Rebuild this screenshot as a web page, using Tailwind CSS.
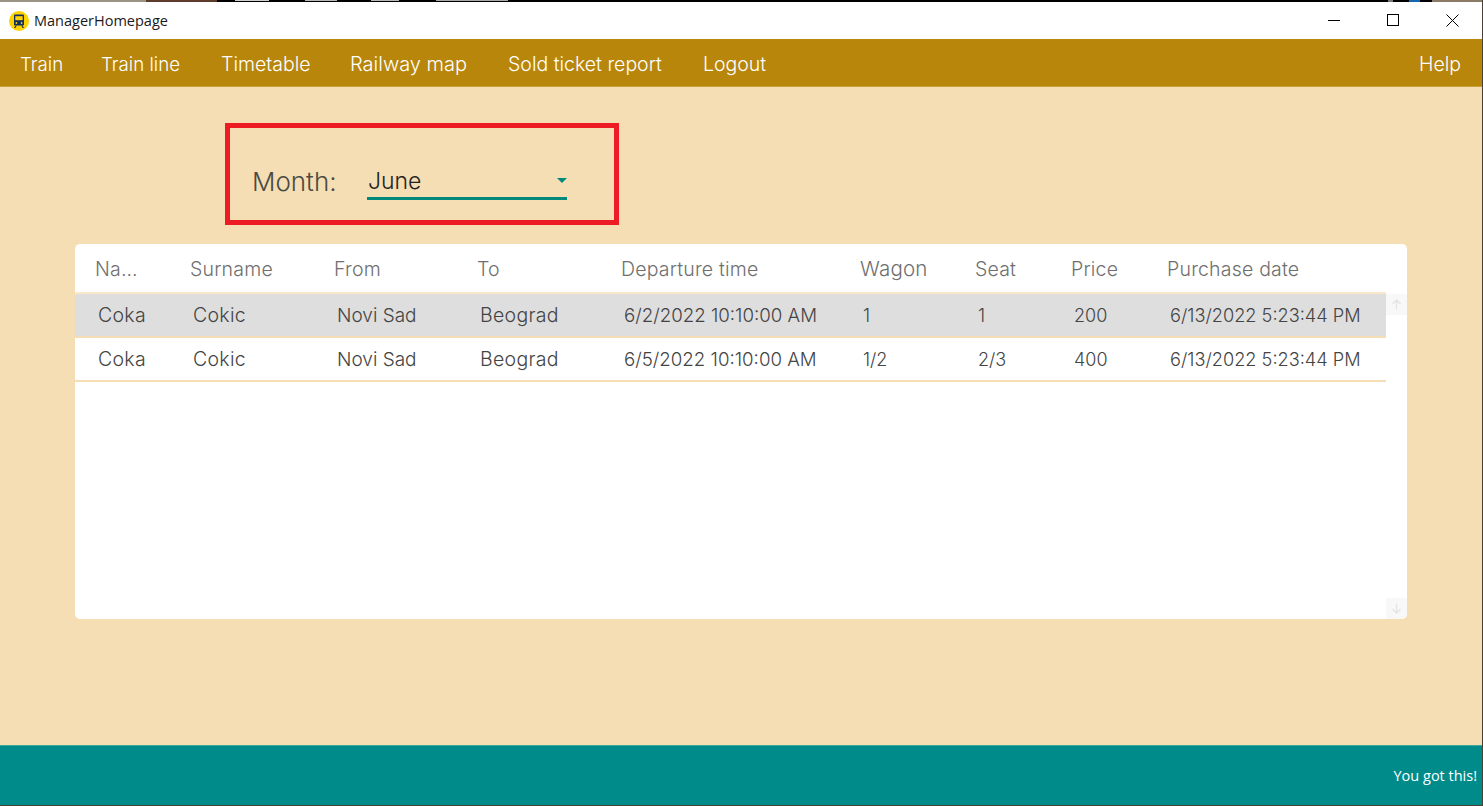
<!DOCTYPE html>
<html lang="en">
<head>
    <meta charset="UTF-8">
    <title>ManagerHomepage</title>
    <script src="https://cdn.jsdelivr.net/npm/@tailwindcss/browser@4"></script>
</head>
<body class="h-[806px] w-[1483px] overflow-hidden flex flex-col bg-[#f5deb3] font-['Inter','Liberation_Sans',sans-serif] font-light border-r border-b border-[#4a4036]">
    <!-- desktop behind the window -->
    <div class="h-[2px] shrink-0 bg-black flex">
        <div class="w-[146px] bg-[#9a9386]"></div>
        <div class="w-[71px] bg-[#5c3a2c]"></div>
        <div class="ml-[18px] w-[34px] h-px bg-[#cfcfcf]"></div>
        <div class="ml-[36px] w-[32px] h-px bg-[#b8b8b8]"></div>
        <div class="ml-[34px] w-[28px] h-px bg-[#b8b8b8]"></div>
        <div class="ml-[37px] w-[72px] h-px bg-[#a8a8a8]"></div>
        <div class="ml-[880px] w-[5px] bg-[#777]"></div>
        <div class="ml-[16px] w-[11px] bg-[#1565b0]"></div>
        <div class="ml-[12px] flex-1 bg-[#8a7a66]"></div>
    </div>

    <!-- title bar -->
    <div class="h-[37px] shrink-0 bg-white flex items-center">
        <svg class="ml-[9px] w-5 h-5" viewBox="0 0 20 20">
            <circle cx="10" cy="10" r="10" fill="#ffd200"/>
            <path d="M6 3.5h8a1 1 0 0 1 1 1v9a1 1 0 0 1-1 1H6a1 1 0 0 1-1-1v-9a1 1 0 0 1 1-1z" fill="#14315e"/>
            <rect x="6.3" y="5.2" width="7.4" height="4" fill="#ffd200"/>
            <path d="M6.5 14.5 5 17h1.4l1.4-2.5zM13.5 14.5 15 17h-1.4l-1.4-2.5z" fill="#14315e"/>
            <circle cx="7.4" cy="12" r=".9" fill="#ffd200"/>
            <circle cx="12.6" cy="12" r=".9" fill="#ffd200"/>
        </svg>
        <span class="ml-[5px] text-[14.5px] font-normal text-[#1a1a1a] font-['Open_Sans',sans-serif]">ManagerHomepage</span>
        <div class="ml-auto flex items-center text-black">
            <svg class="w-[13px] h-[13px] mr-[46px]" viewBox="0 0 13 13"><path d="M0 6.5h12" stroke="currentColor" fill="none"/></svg>
            <svg class="w-[13px] h-[13px] mr-[46px]" viewBox="0 0 13 13"><rect x=".5" y=".5" width="11" height="11" stroke="currentColor" fill="none"/></svg>
            <svg class="w-[13px] h-[13px] mr-[23px]" viewBox="0 0 13 13"><path d="M.5.5l12 12M12.5.5l-12 12" stroke="currentColor" fill="none"/></svg>
        </div>
    </div>

    <!-- menu -->
    <nav class="h-[48px] shrink-0 bg-[#b8860b] border-b border-[#c9a13a] text-white text-[19.5px] flex items-baseline pl-[20px] pr-[21px] pt-[10px]">
        <span class="w-[81px] text-[18.7px]">Train</span>
        <span class="w-[120px] text-[18.7px]">Train line</span>
        <span class="w-[129px]">Timetable</span>
        <span class="w-[158px] text-[20px]">Railway map</span>
        <span class="w-[195px]">Sold ticket report</span>
        <span>Logout</span>
        <span class="ml-auto">Help</span>
    </nav>

    <main class="flex-1 flex flex-col">
        <!-- month filter -->
        <div class="ml-[225px] mt-[36px] w-[394px] h-[102px] border-[5px] border-[#ed1c24] flex items-center pl-[22px] pt-[15px]">
            <span class="w-[115px] text-[26px] text-[#4a4a44]">Month:</span>
            <div class="w-[200px] h-[37px] border-b-[3px] border-[#00897b] flex items-center justify-between text-[23px] text-[#222]">
                <span class="pl-px pt-[2px]">June</span>
                <span class="w-0 h-0 border-x-[5px] border-x-transparent border-t-[5px] border-t-[#00897b]"></span>
            </div>
        </div>

        <!-- tickets table -->
        <div class="relative ml-[75px] mt-[19px] w-[1332px] h-[375px] bg-white rounded-[5px]">
            <div class="w-[1311px] text-[18px] text-[#444]">
                <div class="h-[48px] flex items-baseline pl-[20px] pt-[10px] text-[19.5px] tracking-[.2px] text-[#6f6f6f]">
                    <span class="w-[95px]">Na…</span>
                    <span class="w-[144px]">Surname</span>
                    <span class="w-[143px]">From</span>
                    <span class="w-[144px]">To</span>
                    <span class="w-[239px]">Departure time</span>
                    <span class="w-[115px] text-[20.5px]">Wagon</span>
                    <span class="w-[96px]">Seat</span>
                    <span class="w-[96px]">Price</span>
                    <span>Purchase date</span>
                </div>
                <div class="h-[46px] flex items-baseline pl-[23px] pt-[7px] bg-[#dedede] border-y-2 border-t-[#fbe8c8] border-b-[#f5deb3]">
                    <span class="w-[95px] text-[19.5px] tracking-[.3px]">Coka</span>
                    <span class="w-[144px] text-[19.5px] tracking-[.3px]">Cokic</span>
                    <span class="w-[143px] text-[19px]">Novi Sad</span>
                    <span class="w-[144px] text-[19.5px] tracking-[.3px]">Beograd</span>
                    <span class="w-[239px] text-[18.7px]">6/2/2022 10:10:00 AM</span>
                    <span class="w-[115px]">1</span>
                    <span class="w-[96px]">1</span>
                    <span class="w-[96px]">200</span>
                    <span class="text-[18.2px]">6/13/2022 5:23:44 PM</span>
                </div>
                <div class="h-[44px] flex items-baseline pl-[23px] pt-[7px] border-b-2 border-[#f5deb3]">
                    <span class="w-[95px] text-[19.5px] tracking-[.3px]">Coka</span>
                    <span class="w-[144px] text-[19.5px] tracking-[.3px]">Cokic</span>
                    <span class="w-[143px] text-[19px]">Novi Sad</span>
                    <span class="w-[144px] text-[19.5px] tracking-[.3px]">Beograd</span>
                    <span class="w-[239px] text-[18.7px]">6/5/2022 10:10:00 AM</span>
                    <span class="w-[115px]">1/2</span>
                    <span class="w-[96px]">2/3</span>
                    <span class="w-[96px]">400</span>
                    <span class="text-[18.2px]">6/13/2022 5:23:44 PM</span>
                </div>
            </div>
            <!-- scrollbar buttons -->
            <div class="absolute right-0 top-[50px] w-[21px] h-[21px] bg-[#f8f8f8] flex items-center justify-center">
                <svg class="w-[11px] h-[11px] text-[#e4e4e4]" viewBox="0 0 11 11"><path d="M5.5 10.5V1M1.5 5l4-4 4 4" fill="none" stroke="currentColor" stroke-width="1.3"/></svg>
            </div>
            <div class="absolute right-0 bottom-0 w-[21px] h-[21px] bg-[#f8f8f8] rounded-br-[5px] flex items-center justify-center">
                <svg class="w-[11px] h-[11px] text-[#e4e4e4]" viewBox="0 0 11 11"><path d="M5.5 .5V10M1.5 6l4 4 4-4" fill="none" stroke="currentColor" stroke-width="1.3"/></svg>
            </div>
        </div>
    </main>

    <!-- footer -->
    <footer class="h-[60px] shrink-0 bg-[#008b8b] border-t border-[#3fa79a] flex items-center justify-end pr-[5px] text-white text-[14.5px] font-normal font-['Open_Sans',sans-serif]">You got this!</footer>
</body>
</html>
